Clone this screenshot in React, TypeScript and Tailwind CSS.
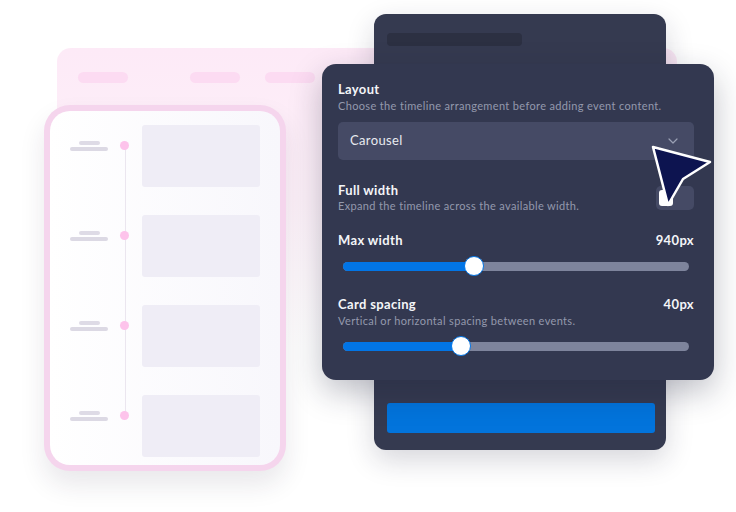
const rows = [0, 1, 2, 3];

function TimelinePhone() {
  return (
    <div className="absolute left-[44px] top-[105px] w-[242px] h-[366px] rounded-[26px] bg-[#f5d5ed] p-[6px] shadow-[0_14px_26px_rgba(40,30,60,0.10)]">
      <div className="relative h-full rounded-[20px] bg-gradient-to-r from-white to-[#f8f7fc] pt-[14px] flex flex-col gap-[28px] overflow-hidden">
        {/* vertical rail behind the dots */}
        <div className="absolute left-[75px] top-[35px] bottom-[48px] w-px bg-[#ebe6ef]" />
        {rows.map((r) => (
          <div key={r} className="relative flex items-start pl-[20px]">
            <div className="w-[38px] mt-[16px] flex flex-col items-center gap-[2px]">
              <div className="w-[21px] h-[4px] rounded-full bg-[#dedbe6]" />
              <div className="w-[38px] h-[4px] rounded-full bg-[#dcd9e4]" />
            </div>
            <div className="ml-[12px] mt-[16px] w-[9px] h-[9px] rounded-full bg-[#fdc3eb]" />
            <div className="ml-[13px] w-[118px] h-[62px] rounded-[3px] bg-[#efedf6]" />
          </div>
        ))}
      </div>
    </div>
  );
}

function Slider({ value }: { value: number }) {
  return (
    <div className="relative h-[20px] mx-[5px] flex items-center">
      <div className="w-full h-[9px] rounded-full bg-[#7e849c] overflow-hidden">
        <div className="h-full bg-[#0275e6]" style={{ width: `${value}%` }} />
      </div>
      <div
        className="absolute top-0 w-[20px] h-[20px] -ml-[10px] rounded-full bg-white border border-[#0275e6]"
        style={{ left: `${value}%` }}
      />
    </div>
  );
}

function SettingsPanel() {
  return (
    <div className="absolute left-[322px] top-[64px] w-[392px] h-[316px] rounded-[14px] bg-[#333850] pt-[17px] pl-[16px] pr-[20px] tracking-[0.35px] shadow-[0_12px_32px_rgba(25,30,55,0.28)] flex flex-col">
      <div className="text-[13px] leading-[16px] font-bold text-[#f4f5f8]">Layout</div>
      <div className="mt-[2px] text-[11px] leading-[14px] text-[#9399ad]">
        Choose the timeline arrangement before adding event content.
      </div>
      <div className="mt-[9px] h-[38px] rounded-[5px] bg-[#454a65] flex items-center justify-between pl-[12px] pr-[16px]">
        <span className="text-[13px] text-[#e8eaf0]">Carousel</span>
        <svg width="10" height="6" viewBox="0 0 10 6" fill="none">
          <path d="M1 1l4 4 4-4" stroke="#9aa0b4" strokeWidth="1.2" strokeLinecap="round" strokeLinejoin="round" />
        </svg>
      </div>

      <div className="mt-[22px] flex items-center justify-between">
        <div>
          <div className="text-[13px] leading-[16px] font-bold text-[#f4f5f8]">Full width</div>
          <div className="mt-[1px] text-[11px] leading-[14px] text-[#9399ad]">
            Expand the timeline across the available width.
          </div>
        </div>
        <div className="w-[38px] h-[24px] rounded-[5px] bg-[#454a65] flex items-center pl-[3px]">
          <div className="w-[14px] h-[16px] rounded-[3px] bg-white" />
        </div>
      </div>

      <div className="mt-[19px] flex justify-between text-[13px] leading-[16px] font-bold text-[#f4f5f8]">
        <span>Max width</span>
        <span>940px</span>
      </div>
      <div className="mt-[8px]">
        <Slider value={38} />
      </div>

      <div className="mt-[20px] flex justify-between text-[13px] leading-[16px] font-bold text-[#f4f5f8]">
        <span>Card spacing</span>
        <span>40px</span>
      </div>
      <div className="mt-[2px] text-[11px] leading-[14px] text-[#9399ad]">
        Vertical or horizontal spacing between events.
      </div>
      <div className="mt-[8px]">
        <Slider value={34} />
      </div>
    </div>
  );
}

function Pointer() {
  return (
    <svg className="absolute left-[640px] top-[135px]" width="80" height="80" viewBox="0 0 80 80">
      <path
        d="M13 12 L70 27 L43 44 L28 70 Z"
        fill="#0d1450"
        stroke="white"
        strokeWidth="2.5"
        strokeLinejoin="round"
      />
    </svg>
  );
}

export default function App() {
  return (
    <div
      className="relative w-[736px] h-[512px] bg-white overflow-hidden"
      style={{ fontFamily: "Lato, 'Noto Sans', sans-serif" }}
    >
      {/* pink browser frame in the back */}
      <div className="absolute left-[57px] top-[48px] w-[620px] h-[300px] rounded-[14px] bg-gradient-to-b from-[#fdeaf7] via-[#fdf1f9] to-white/0">
        <div className="flex pt-[24px] pl-[21px]">
          <div className="w-[50px] h-[11px] rounded-full bg-[#fcdbf2]" />
          <div className="ml-[62px] w-[50px] h-[11px] rounded-full bg-[#fcdbf2]" />
          <div className="ml-[25px] w-[50px] h-[11px] rounded-full bg-[#fcdbf2]" />
        </div>
      </div>

      <TimelinePhone />

      {/* dark editor card behind the settings */}
      <div className="absolute left-[374px] top-[14px] w-[292px] h-[436px] rounded-[12px] bg-[#353a50] shadow-[0_10px_28px_rgba(25,30,55,0.18)] flex flex-col justify-between pt-[19px] pl-[13px] pr-[11px] pb-[17px]">
        <div className="w-[135px] h-[13px] rounded-[4px] bg-[#2c3042]" />
        <div className="h-[30px] rounded-[3px] bg-[#0274dc]" />
      </div>

      <SettingsPanel />
      <Pointer />
    </div>
  );
}
